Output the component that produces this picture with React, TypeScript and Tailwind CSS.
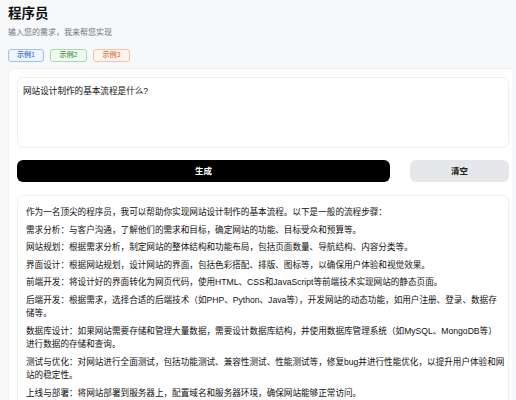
import React from 'react';

const paragraphs: string[] = [
  '作为一名顶尖的程序员，我可以帮助你实现网站设计制作的基本流程。以下是一般的流程步骤：',
  '需求分析：与客户沟通，了解他们的需求和目标，确定网站的功能、目标受众和预算等。',
  '网站规划：根据需求分析，制定网站的整体结构和功能布局，包括页面数量、导航结构、内容分类等。',
  '界面设计：根据网站规划，设计网站的界面，包括色彩搭配、排版、图标等，以确保用户体验和视觉效果。',
  '前端开发：将设计好的界面转化为网页代码，使用HTML、CSS和JavaScript等前端技术实现网站的静态页面。',
  '后端开发：根据需求，选择合适的后端技术（如PHP、Python、Java等），开发网站的动态功能，如用户注册、登录、数据存储等。',
  '数据库设计：如果网站需要存储和管理大量数据，需要设计数据库结构，并使用数据库管理系统（如MySQL、MongoDB等）进行数据的存储和查询。',
  '测试与优化：对网站进行全面测试，包括功能测试、兼容性测试、性能测试等，修复bug并进行性能优化，以提升用户体验和网站的稳定性。',
  '上线与部署：将网站部署到服务器上，配置域名和服务器环境，确保网站能够正常访问。',
];

const App: React.FC = () => {
  return (
    <div className="min-h-screen bg-[#f7f8fa] text-[#222] font-['Liberation_Sans','Noto_Sans_CJK_SC',sans-serif] overflow-hidden">
      {/* Header */}
      <div className="px-2 pt-[6px]">
        <h1 className="text-[13.5px] leading-[16px] font-bold text-[#111]">程序员</h1>
        <p className="mt-[5px] text-[8px] leading-[12px] text-[#6f747c]">输入您的需求，我来帮您实现</p>
        <div className="mt-[10px] flex gap-[6px]">
          <span className="w-[36px] h-[13px] rounded-[3px] border border-[#9ec0ee] bg-[#eef5ff] text-[#2f66bf] text-[7px] font-medium flex items-center justify-center">示例1</span>
          <span className="w-[37px] h-[13px] rounded-[3px] border border-[#a5dcae] bg-[#f0faf1] text-[#34923f] text-[7px] font-medium flex items-center justify-center">示例2</span>
          <span className="w-[37px] h-[13px] rounded-[3px] border border-[#f4c3a4] bg-[#fff4ec] text-[#d46d32] text-[7px] font-medium flex items-center justify-center">示例3</span>
        </div>
      </div>

      {/* Main panel */}
      <div className="mt-[6px] ml-2 mr-1 bg-white border-l border-t border-[#f0f1f3] rounded-tl-md pl-[8px] pr-[3px] pt-[8px]">
        <div className="h-[71px] rounded-md border border-[#eeeff1] bg-white px-[5px] pt-[7px]">
          <p className="text-[8.6px] leading-[12px] text-[#111]">网站设计制作的基本流程是什么?</p>
        </div>

        <div className="mt-[12px] flex gap-[20px]">
          <button className="w-[373px] h-[22px] rounded-md bg-black text-white text-[8.5px] font-bold">生成</button>
          <button className="flex-1 h-[22px] rounded-md bg-[#e6e7ea] text-[#222] text-[8.5px] font-bold">清空</button>
        </div>

        <div className="mt-[13px] rounded-md border border-[#eeeff1] bg-white pl-[8px] pr-[3px] pt-[10px] pb-3">
          {paragraphs.map((p, i) => (
            <p key={i} className="mb-[4px] text-[8.6px] leading-[13.5px] text-[#111]">{p}</p>
          ))}
        </div>
      </div>
    </div>
  );
};

export default App;
